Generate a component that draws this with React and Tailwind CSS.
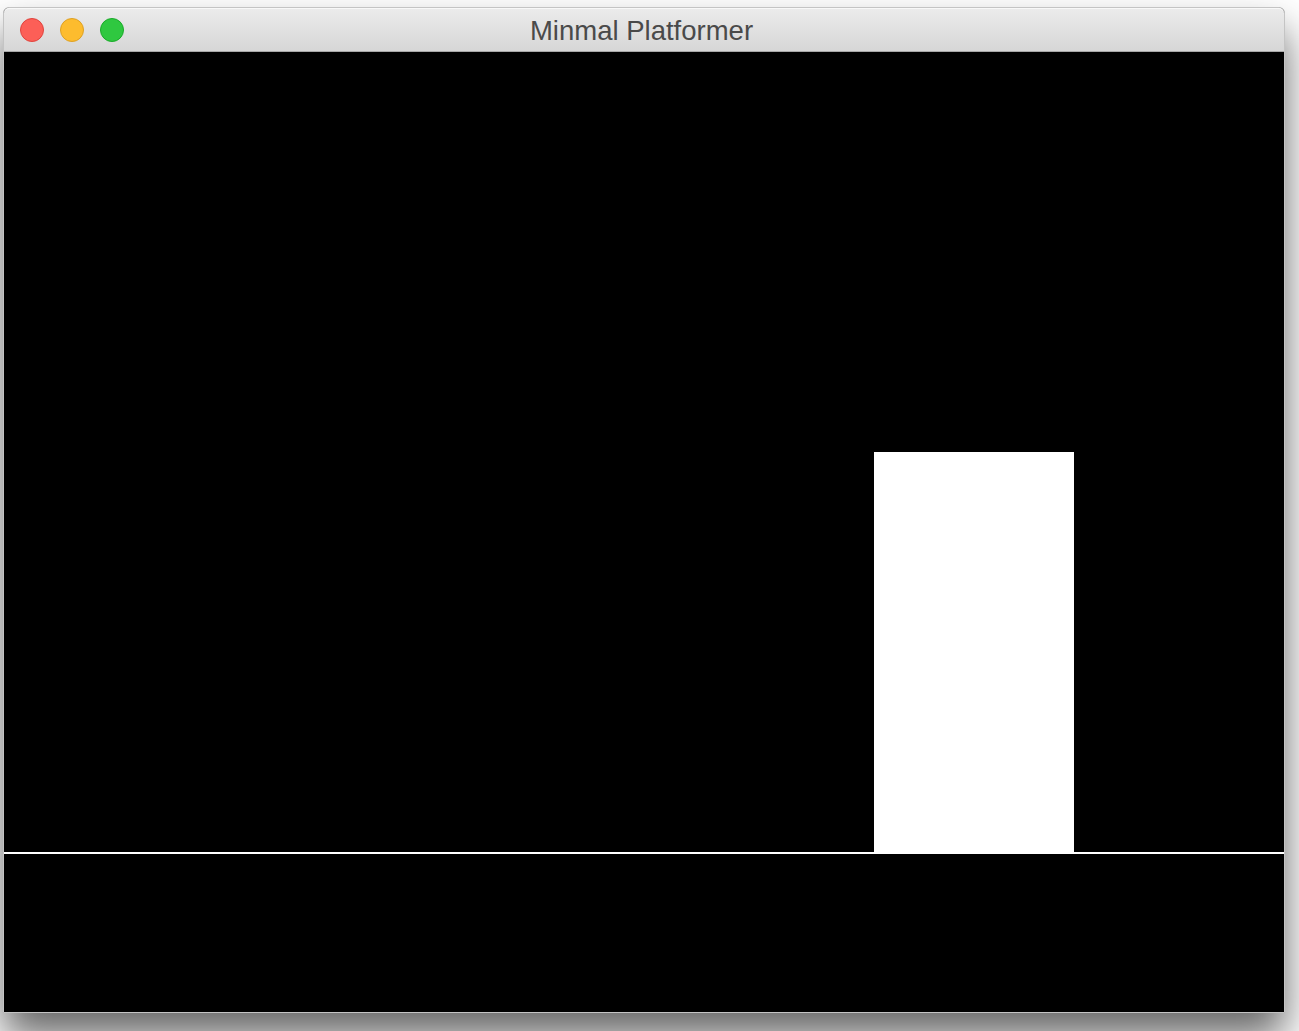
export default function App() {
  return (
    <div className="w-[1299px] h-[1031px] bg-white overflow-hidden pt-[7px] pl-[3px]" style={{ fontFamily: '"Helvetica Neue", "Liberation Sans", Arial, sans-serif' }}>
      <div className="w-[1282px] rounded-t-[6px] border border-[#c4c4c4] bg-black shadow-[0_24px_40px_rgba(0,0,0,0.6)]">
        <div className="h-[44px] rounded-t-[5px] border-b border-[#a8a8a8] bg-gradient-to-b from-[#ececec] to-[#d6d6d6] flex items-center relative shadow-[inset_0_1px_0_#f8f8f8]">
          <div className="flex items-center gap-[16px] pl-[16px]">
            <div className="w-[24px] h-[24px] rounded-full bg-[#fc5f57] border border-[#e0443e]" />
            <div className="w-[24px] h-[24px] rounded-full bg-[#fdbc2e] border border-[#dea123]" />
            <div className="w-[24px] h-[24px] rounded-full bg-[#2fc840] border border-[#1aab29]" />
          </div>
          <div className="absolute inset-0 flex items-center justify-center text-[27.5px] leading-none text-[#4a4a4a] pt-[3px] pr-[5px] tracking-[0px]">
            Minmal Platformer
          </div>
        </div>
        <div className="h-[960px] w-[1280px] bg-black flex flex-col">
          <div className="h-[400px] shrink-0" />
          <div className="h-[400px] shrink-0 flex">
            <div className="w-[870px] shrink-0" />
            <div className="w-[200px] h-[400px] bg-white" />
          </div>
          <div className="h-[2px] bg-white shrink-0" />
          <div className="flex-1" />
        </div>
      </div>
    </div>
  );
}
